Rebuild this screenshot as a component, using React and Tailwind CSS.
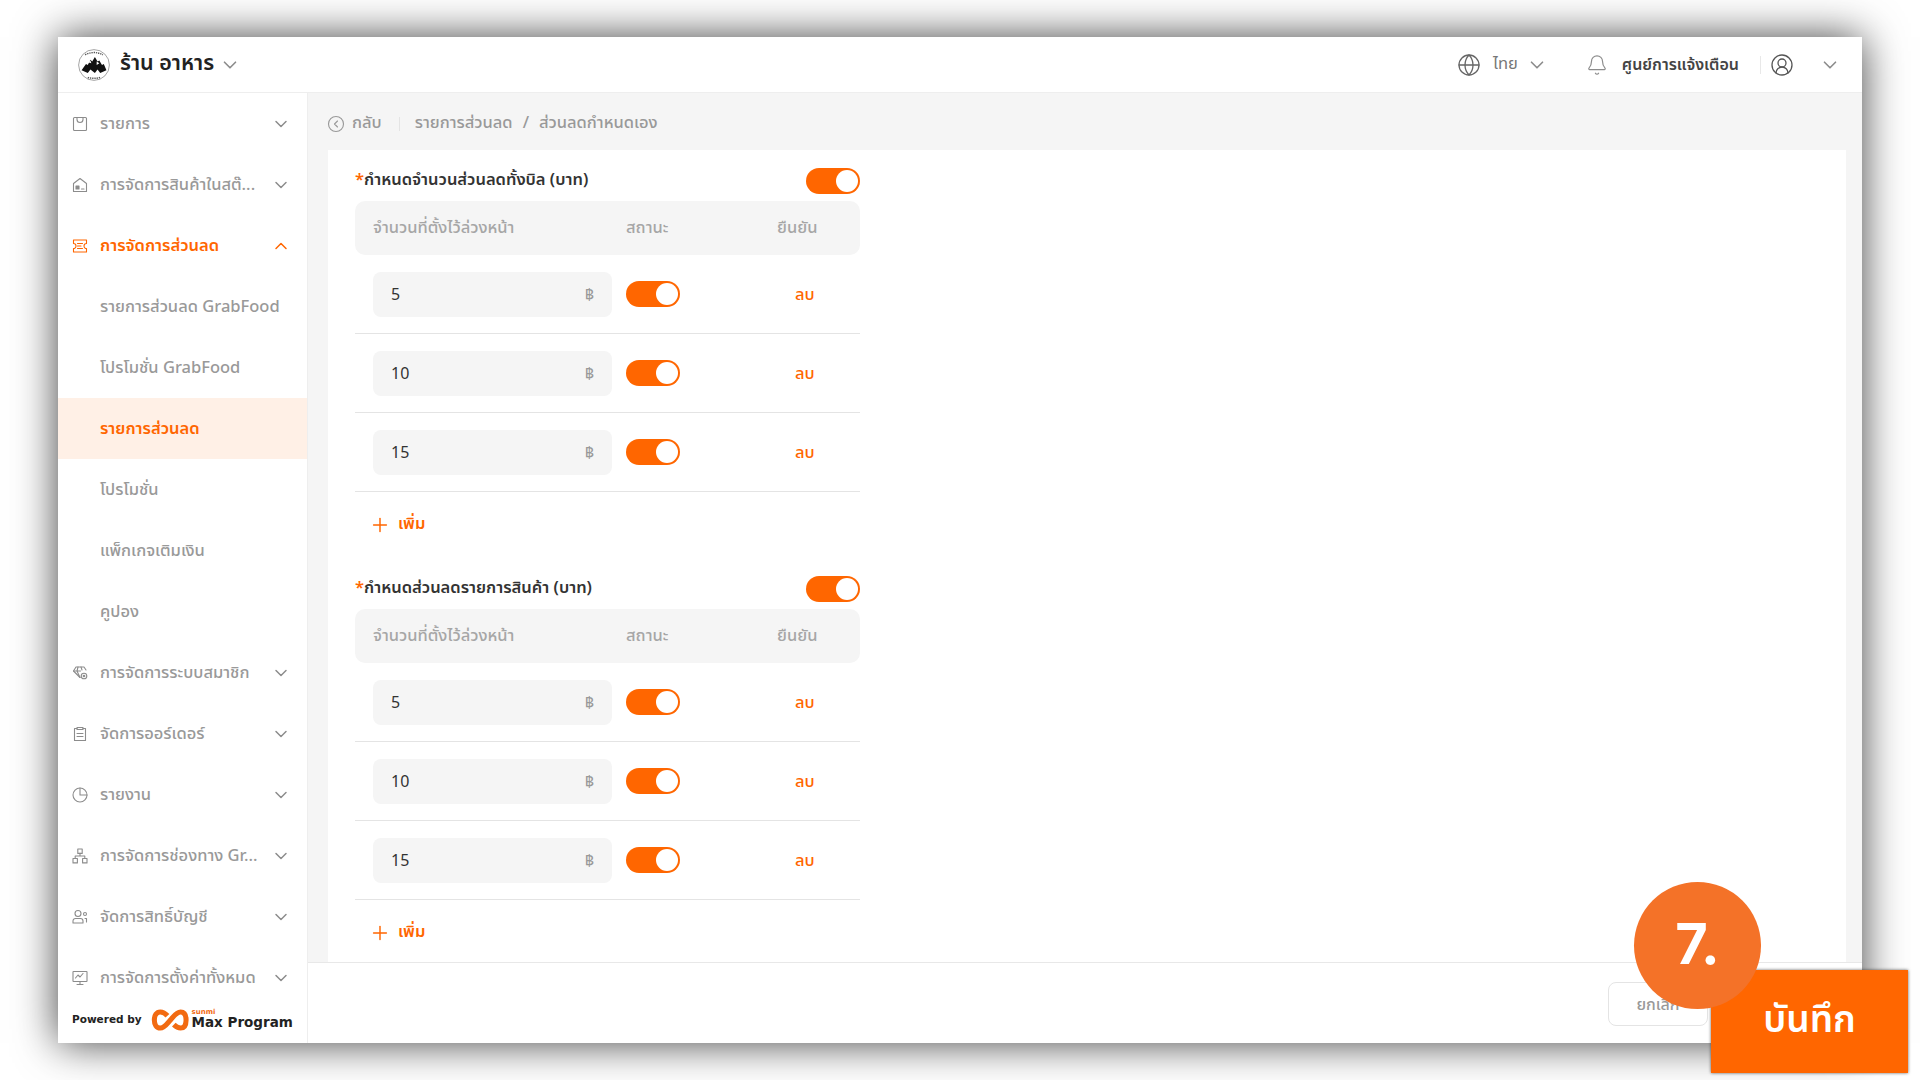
import React from 'react';
import { ChevronDown, ChevronUp, Globe, Bell, CircleUserRound, CircleChevronLeft, Plus } from 'lucide-react';

// sidebar icons are drawn by hand, the packaged ones have other strokes
const Svg = ({ className, children }) => (
  <svg viewBox="0 0 16 16" fill="none" stroke="currentColor" strokeWidth="1.1" strokeLinejoin="round" strokeLinecap="round" className={className}>
    {children}
  </svg>
);

const InboxIcon = (p) => (
  <Svg {...p}>
    <rect x="1.500" y="1.500" width="13" height="13" rx="1" />
    <path d="M5 1.500v2a3 3 0 0 0 6 0v-2" />
  </Svg>
);
const HomeIcon = (p) => (
  <Svg {...p}>
    <path d="M1.500 6.500 8 1.500l6.500 5v8h-13z" />
    <rect x="4" y="9" width="3" height="3" fill="currentColor" />
    <path d="M9.500 12h2.500" />
  </Svg>
);
const TicketIcon = (p) => (
  <Svg {...p}>
    <path d="M1.500 2h13v3.500a2.500 2.500 0 0 0 0 5V14h-13v-3.500a2.500 2.500 0 0 0 0-5z" />
    <path d="M5.500 5.500h5M5.500 8h3.500M5.500 10.500h5" />
  </Svg>
);
const GemIcon = (p) => (
  <Svg {...p}>
    <path d="M8 12.500 1.500 6l2.500-4h8l2 3" />
    <path d="M1.500 6h7M5 6l3 6.500M5 6l1-4M9 2l1 3" />
    <circle cx="12" cy="11" r="2.800" />
    <circle cx="12" cy="11" r="0.800" />
  </Svg>
);
const ClipboardIcon = (p) => (
  <Svg {...p}>
    <path d="M5 2.500H2.500v12h11v-12H11" />
    <rect x="5" y="1.500" width="6" height="2" />
    <path d="M5 7.500h6M5 10.500h6" />
  </Svg>
);
const PieIcon = (p) => (
  <Svg {...p}>
    <circle cx="8" cy="8" r="7" />
    <path d="M8 1v7h7" />
  </Svg>
);
const TreeIcon = (p) => (
  <Svg {...p}>
    <rect x="5.800" y="1" width="4.400" height="4.400" />
    <rect x="1" y="10.500" width="4.400" height="4.400" />
    <rect x="10.600" y="10.500" width="4.400" height="4.400" />
    <path d="M8 5.400V8M3.200 10.500V8h9.600v2.500" />
  </Svg>
);
const UsersIcon = (p) => (
  <Svg {...p}>
    <circle cx="6" cy="4.500" r="3" />
    <path d="M1 14v-2a2.500 2.500 0 0 1 2.500-2.500h5A2.500 2.500 0 0 1 11 12v2z" />
    <circle cx="13" cy="5" r="1.500" />
    <path d="M13 9.500h1.500V13" />
  </Svg>
);
const ScreenIcon = (p) => (
  <Svg {...p}>
    <rect x="1" y="1.500" width="14" height="10" rx="0.500" />
    <path d="M3.500 8 6 5l2 2 3-3.500M8 11.500v3M5 14.500h6" />
  </Svg>
);

const ShopLogo = () => (
  <svg viewBox="0 0 36 36" className="w-[32px] h-[32px] shrink-0">
    <circle cx="18" cy="18" r="17.300" fill="#fff" stroke="#555" strokeWidth="0.600" />
    <path d="M4 24 9 17l2 1 3-6 2 2 3-5 3 5 2-1 3 5 2-1 3 7-7 3-3-4-3 4-5-4-3 4z" fill="#111" />
    <path d="M11 15l3-2 1 3zM21 14l3 2-3 2z" fill="#fff" />
    <path d="M8 6.500q10-5 20 0M11 32q7 2 14 0" fill="none" stroke="#555" strokeWidth="1.600" strokeDasharray="1.500 1" />
  </svg>
);

const MaxLogo = () => (
  <svg viewBox="0 0 44 26" className="w-[40px] h-[22px] shrink-0">
    <path
      d="M19 8C16 4.500 13 3.500 10.500 3.500 6 3.500 3.500 7.500 3.500 13s2.500 9.500 7 9.500c5 0 8-5 12-9.500s7-9.500 12-9.500 6.500 4 6.500 9.500-2 9.500-6.500 9.500c-3 0-5-1-8-4"
      fill="none"
      stroke="#f26a11"
      strokeWidth="6"
    />
  </svg>
);

const menuTop = [
  { label: 'รายการ', Icon: InboxIcon },
  { label: 'การจัดการสินค้าในสต๊...', Icon: HomeIcon }
];

const subMenu = ['รายการส่วนลด GrabFood', 'โปรโมชั่น GrabFood', 'รายการส่วนลด', 'โปรโมชั่น', 'แพ็กเกจเติมเงิน', 'คูปอง'];

const menuBottom = [
  { label: 'การจัดการระบบสมาชิก', Icon: GemIcon },
  { label: 'จัดการออร์เดอร์', Icon: ClipboardIcon },
  { label: 'รายงาน', Icon: PieIcon },
  { label: 'การจัดการช่องทาง Gr...', Icon: TreeIcon },
  { label: 'จัดการสิทธิ์บัญชี', Icon: UsersIcon },
  { label: 'การจัดการตั้งค่าทั้งหมด', Icon: ScreenIcon }
];

const MenuItem = ({ label, Icon }) => (
  <div className="h-[61px] flex items-center pl-[14px] pr-[16px] text-[#999999] shrink-0">
    <Icon className="w-[16px] h-[16px] mr-[12px] shrink-0 text-[#8c8c8c]" />
    <span className="flex-1 text-[16.5px] font-medium whitespace-nowrap pt-[2px]">{label}</span>
    <ChevronDown className="w-[20px] h-[20px] shrink-0 text-[#8c8c8c]" strokeWidth={1.8} />
  </div>
);

const Toggle = () => (
  <div className="w-[54px] h-[26px] rounded-full bg-[#ff6600] flex items-center justify-end pr-[2px] shrink-0">
    <div className="w-[22px] h-[22px] rounded-full bg-white"></div>
  </div>
);

const DiscountRow = ({ value }) => (
  <div className="h-[79px] flex items-center pl-[18px] border-b border-[#e4e4e4] shrink-0">
    <div className="w-[239px] h-[45px] rounded-[8px] bg-[#f5f5f5] flex items-center justify-between px-[18px] pt-[2px] text-[#333333] text-[16px]">
      <span>{value}</span>
      <span className="text-[#999999] text-[16px]">฿</span>
    </div>
    <div className="ml-[14px]">
      <Toggle />
    </div>
    <span className="ml-[115px] pt-[2px] text-[#ff6600] text-[16.5px] font-medium">ลบ</span>
  </div>
);

const DiscountSection = ({ title }) => (
  <div className="w-[505px]">
    <div className="h-[27px] flex items-center justify-between">
      <span className="text-[16.5px] font-semibold text-[#333333] whitespace-nowrap">
        <span className="text-[#ff6600]">*</span>
        {title}
      </span>
      <Toggle />
    </div>
    <div className="mt-[7px] h-[54px] rounded-[10px] bg-[#f5f5f5] flex items-center pl-[18px] text-[16.5px] font-medium text-[#a6a6a6]">
      <span className="w-[253px]">จำนวนที่ตั้งไว้ล่วงหน้า</span>
      <span className="w-[151px]">สถานะ</span>
      <span>ยืนยัน</span>
    </div>
    <div className="flex flex-col">
      <DiscountRow value="5" />
      <DiscountRow value="10" />
      <DiscountRow value="15" />
    </div>
    <div className="h-[65px] flex items-center pl-[14px] text-[#ff6600] text-[16.5px] font-semibold">
      <Plus className="w-[22px] h-[22px] mr-[7px]" strokeWidth={1.6} />
      เพิ่ม
    </div>
  </div>
);

export default function App() {
  return (
    <div
      className="relative h-screen overflow-hidden bg-white pt-[37px] pb-[37px] px-[58px]"
      style={{ fontFamily: '"Noto Sans Thai", "Noto Sans", Inter, "Liberation Sans", sans-serif' }}
    >
      <div className="h-full bg-white flex flex-col shadow-[0_0_40px_rgba(0,0,0,0.75)]">
        {/* Top bar */}
        <div className="h-[56px] shrink-0 flex items-center border-b border-[#eeeeee] pl-[20px] pr-[21px]">
          <ShopLogo />
          <span className="ml-[10px] text-[21.5px] font-semibold text-[#222222]">ร้าน อาหาร</span>
          <ChevronDown className="ml-[5px] w-[22px] h-[22px] text-[#8c8c8c]" strokeWidth={1.8} />
          <div className="flex-1"></div>
          <Globe className="w-[24px] h-[24px] text-[#666666]" strokeWidth={1.3} />
          <span className="ml-[12px] text-[16.5px] text-[#777777]">ไทย</span>
          <ChevronDown className="ml-[8px] w-[22px] h-[22px] text-[#8c8c8c]" strokeWidth={1.8} />
          <Bell className="ml-[38px] w-[22px] h-[22px] text-[#8c8c8c]" strokeWidth={1.3} />
          <span className="ml-[14px] text-[16px] font-semibold text-[#444444]">ศูนย์การแจ้งเตือน</span>
          <div className="ml-[21px] w-px h-[18px] bg-[#e8e8e8]"></div>
          <CircleUserRound className="ml-[9px] w-[24px] h-[24px] text-[#555555]" strokeWidth={1.3} />
          <ChevronDown className="ml-[25px] w-[22px] h-[22px] text-[#8c8c8c]" strokeWidth={1.8} />
        </div>

        <div className="flex-1 flex min-h-0">
          {/* Sidebar */}
          <div className="w-[250px] shrink-0 flex flex-col border-r border-[#eeeeee]">
            <div className="flex-1 flex flex-col overflow-hidden">
              {menuTop.map((m) => (
                <MenuItem key={m.label} {...m} />
              ))}
              <div className="h-[61px] flex items-center pl-[14px] pr-[16px] text-[#ff6600] shrink-0">
                <TicketIcon className="w-[16px] h-[16px] mr-[12px] shrink-0" />
                <span className="flex-1 text-[16.5px] font-semibold pt-[2px]">การจัดการส่วนลด</span>
                <ChevronUp className="w-[20px] h-[20px]" strokeWidth={1.8} />
              </div>
              {subMenu.map((s) => (
                <div
                  key={s}
                  className={
                    s === 'รายการส่วนลด'
                      ? 'h-[61px] flex items-center pl-[42px] pt-[2px] text-[16.5px] font-semibold text-[#ff6600] bg-[#fff0e6] shrink-0'
                      : 'h-[61px] flex items-center pl-[42px] pt-[2px] text-[16.5px] font-medium text-[#999999] shrink-0'
                  }
                >
                  {s}
                </div>
              ))}
              {menuBottom.map((m) => (
                <MenuItem key={m.label} {...m} />
              ))}
            </div>
            <div className="h-[35px] shrink-0 flex items-start pl-[14px]">
              <span className="text-[10.5px] font-bold text-[#222222] whitespace-nowrap mt-[4px]" style={{ fontFamily: '"DejaVu Sans", sans-serif' }}>
                Powered by
              </span>
              <div className="ml-[8px] mt-[1px]">
                <MaxLogo />
              </div>
              <div className="ml-[2px] flex flex-col leading-none mt-[1px]" style={{ fontFamily: '"DejaVu Sans", sans-serif' }}>
                <span className="text-[7px] text-[#f26a11] font-bold">sunmi</span>
                <span className="text-[13.5px] font-bold text-[#222222] whitespace-nowrap">Max Program</span>
              </div>
            </div>
          </div>

          {/* Main */}
          <div className="flex-1 min-w-0 flex flex-col bg-[#f5f5f5]">
            <div className="h-[57px] shrink-0 flex items-center pl-[19px] pt-[4px] text-[16.5px] text-[#999999] font-medium">
              <CircleChevronLeft className="w-[18px] h-[18px]" strokeWidth={1.5} />
              <span className="ml-[7px]">กลับ</span>
              <div className="ml-[17px] mr-[15px] w-px h-[14px] bg-[#e4e4e4]"></div>
              <span>รายการส่วนลด</span>
              <span className="mx-[10px]">/</span>
              <span>ส่วนลดกำหนดเอง</span>
            </div>
            <div className="flex-1 min-h-0 ml-[20px] mr-[16px] bg-white pl-[27px] pt-[17px] overflow-hidden">
              <DiscountSection title="กำหนดจำนวนส่วนลดทั้งบิล (บาท)" />
              <div className="mt-[18px]">
                <DiscountSection title="กำหนดส่วนลดรายการสินค้า (บาท)" />
              </div>
            </div>
            <div className="h-[81px] shrink-0 bg-white border-t border-[#e8e8e8] flex items-start justify-end pt-[19px] pr-[154px]">
              <div className="w-[100px] h-[44px] rounded-[8px] border border-[#e4e4e4] flex items-center justify-center pt-[2px] text-[16px] font-medium text-[#999999]">
                ยกเลิก
              </div>
            </div>
          </div>
        </div>
      </div>

      {/* Overlaid tutorial marks */}
      <div className="absolute left-[1711px] top-[970px] w-[197px] h-[103px] bg-[#ff6600] shadow-[0_0_3px_rgba(0,0,0,0.6)] flex items-center justify-center text-white text-[37px] font-semibold">
        บันทึก
      </div>
      <div className="absolute left-[1634px] top-[882px] w-[127px] h-[127px] rounded-full bg-[#f47228] flex items-center justify-center pb-[3px] text-white text-[56px] font-bold" style={{ fontFamily: 'Inter, sans-serif' }}>
        7.
      </div>
    </div>
  );
}
